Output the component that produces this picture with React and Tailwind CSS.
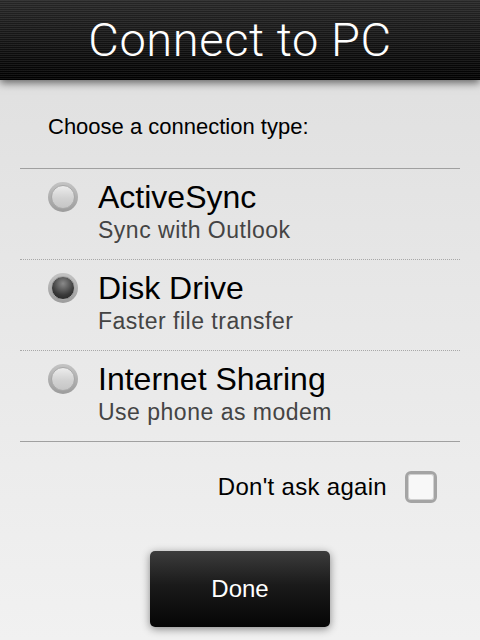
import { useState } from "react";

const options = [
  { id: "activesync", title: "ActiveSync", subtitle: "Sync with Outlook" },
  { id: "disk", title: "Disk Drive", subtitle: "Faster file transfer" },
  { id: "internet", title: "Internet Sharing", subtitle: "Use phone as modem" },
];

const Radio = ({ checked }) => (
  <div className="w-[30px] h-[30px] shrink-0 rounded-full p-[3px] bg-[linear-gradient(180deg,#c4c4c4,#9c9c9c)]">
    <div
      className={`w-full h-full rounded-full border border-[#a8a8a8] ${
        checked
          ? "bg-[radial-gradient(circle_at_50%_30%,#8a8a8a,#3a3a3a_60%,#1e1e1e)]"
          : "bg-[linear-gradient(180deg,#ececec,#d2d2d2_55%,#c6c6c6)]"
      }`}
    />
  </div>
);

export default function App() {
  const [selected, setSelected] = useState("disk");
  const [dontAsk, setDontAsk] = useState(false);

  return (
    <div className="w-[480px] h-[640px] overflow-hidden flex flex-col bg-[linear-gradient(180deg,#dedede,#e6e6e6_40%,#f1f1f1)] font-['Liberation_Sans',Arial,sans-serif]">
      {/* Title bar */}
      <div className="relative z-10 h-[80px] shrink-0 flex items-center justify-center shadow-[0_3px_8px_rgba(0,0,0,0.55)] bg-[repeating-linear-gradient(180deg,rgba(255,255,255,0.08)_0_1px,transparent_1px_2px),linear-gradient(180deg,#262626,#101010_60%,#000)]">
        <h1 className="text-white text-[47px] leading-none font-light font-['Roboto',sans-serif] tracking-[0.6px] pb-[2px]">
          Connect to PC
        </h1>
      </div>

      <div className="px-[20px] flex flex-col">
        <div className="h-[89px] pl-[28px] pt-[34px] border-b border-[#a0a0a0] text-[22px] leading-[26px] text-black">
          Choose a connection type:
        </div>

        {options.map((opt, i) => (
          <button
            key={opt.id}
            onClick={() => setSelected(opt.id)}
            className={`h-[91px] flex items-start gap-[20px] pl-[28px] text-left border-b ${
              i === options.length - 1 ? "border-solid border-[#a0a0a0]" : "border-dotted border-[#a8a8a8]"
            }`}
          >
            <div className="pt-[13px]">
              <Radio checked={selected === opt.id} />
            </div>
            <div className="pt-[11px]">
              <div className="text-[32px] leading-[35px] text-black">{opt.title}</div>
              <div className="mt-[2px] text-[23px] leading-[27px] tracking-[0.5px] text-[#444]">{opt.subtitle}</div>
            </div>
          </button>
        ))}

        <div className="flex items-center justify-end gap-[18px] pr-[23px] mt-[29px]">
          <span className="text-[24px] leading-[28px] tracking-[0.3px] text-black">Don't ask again</span>
          <button
            onClick={() => setDontAsk(!dontAsk)}
            className="w-[32px] h-[32px] rounded-[6px] border-[3px] border-[#a4a4a4] bg-[#f8f8f8] shadow-[inset_0_0_0_1px_#d0d0d0] flex items-center justify-center text-black text-[20px]"
          >
            {dontAsk ? "✓" : ""}
          </button>
        </div>

        <div className="flex justify-center mt-[48px]">
          <button className="w-[180px] h-[76px] rounded-[5px] text-white text-[24px] bg-[linear-gradient(180deg,#3c3c3c,#1a1a1a_45%,#050505)] shadow-[0_2px_8px_rgba(0,0,0,0.45)]">
            Done
          </button>
        </div>
      </div>
    </div>
  );
}
